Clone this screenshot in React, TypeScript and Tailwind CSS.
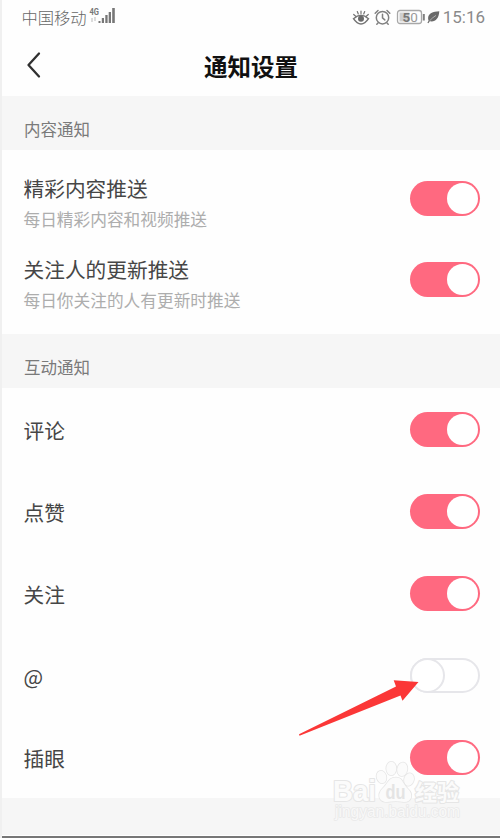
import React from 'react';

function Toggle({ on }: { on: boolean }) {
  return on ? (
    <div className="flex h-[35px] w-[70px] shrink-0 items-center justify-end rounded-full bg-[#ff6980] pr-[2px]">
      <div className="size-[31px] rounded-full bg-white" />
    </div>
  ) : (
    <div className="flex h-[35px] w-[70px] shrink-0 items-center rounded-full border-2 border-[#e6e6ea] bg-white">
      <div className="-ml-[2px] size-[35px] shrink-0 rounded-full border-2 border-[#e6e6ea] bg-white" />
    </div>
  );
}

function Section({ title }: { title: string }) {
  return (
    <div className="flex h-[54px] shrink-0 items-center bg-[#f6f6f6] pt-[12px] pl-[22px] text-[16.5px] leading-none text-[#7a7a7a]">
      {title}
    </div>
  );
}

function Described({ title, note }: { title: string; note: string }) {
  return (
    <div className="flex h-[81px] items-center justify-between pr-[20.5px] pl-[21.5px]">
      <div className="flex flex-col gap-[12px] pt-[8px] leading-none">
        <span className="text-[20.7px] text-[#464646]">{title}</span>
        <span className="text-[16.7px] text-[#adadad]">{note}</span>
      </div>
      <Toggle on />
    </div>
  );
}

function Row({ label, on }: { label: string; on: boolean }) {
  return (
    <div className="flex h-[82px] shrink-0 items-center justify-between pr-[20.5px] pl-[21.5px] text-[20.7px] leading-none text-[#464646]">
      <span className="pt-[2px]">{label}</span>
      <Toggle on={on} />
    </div>
  );
}

function StatusBar() {
  return (
    <div className="flex h-[34px] shrink-0 items-center pr-[15px] pl-[19.5px] text-[#777]">
      <span className="text-[16.3px] leading-none font-light text-[#666]">中国移动</span>
      <svg width="30" height="20" viewBox="0 0 30 20" className="ml-[2px] -mt-[2px]" fill="#777">
        <text x="0.5" y="8.5" fontSize="9" fontWeight="700" fontFamily="Roboto" textLength="9.5" lengthAdjust="spacingAndGlyphs">4G</text>
        <path d="M2 12h2v4H2zM5 11h2v4H5z" opacity=".25" />
        <path d="M9.5 15h2v2h-2zM12.8 12H15v5h-2.2zM16.3 9h2.3v8h-2.3zM19.7 6H22v11h-2.3zM23.2 2h2.6v15h-2.6z" />
      </svg>
      <div className="ml-auto flex items-center">
        <svg width="18" height="18" viewBox="0 0 18 18" fill="none" stroke="#747474" strokeWidth="1.5" strokeLinecap="round">
          <path d="M1.5 10.7Q9 3.9 16.5 10.7Q13 16 9 16T1.5 10.7Z" />
          <path d="M1.7 6.5 4 8.5M5.3 3.5l1 2.5M12.7 3.5l-1 2.5M16.3 6.5 14 8.5M9 3v2.5" strokeWidth="1.2" />
          <circle cx="9" cy="10.7" r="3" fill="#696969" stroke="none" />
        </svg>
        <svg width="17" height="18" viewBox="0 0 17 18" fill="none" stroke="#808080" strokeWidth="1.5" strokeLinecap="round" className="ml-[4px]">
          <circle cx="8.5" cy="9.7" r="6.2" />
          <path d="M8.5 6.2v3.7l2.3 2M1.2 5.2 4 2.5M15.8 5.2 13 2.5M4 15l-1.2 1.2M13 15l1.2 1.2" />
        </svg>
        <svg width="30" height="16" viewBox="0 0 30 16" className="ml-[5px]" fill="none">
          <rect x="1.5" y="1.5" width="24" height="13" rx="2.5" stroke="#a8a8a8" strokeWidth="1.3" />
          <rect x="3.5" y="3.5" width="10" height="9" fill="#cfcfcf" />
          <path d="M27.8 5v6.5" stroke="#808080" strokeWidth="2" />
          <text x="6.5" y="12.5" fontSize="13.5" fontFamily="Roboto" fill="#777"><tspan fontWeight="700">5</tspan><tspan fill="#999">0</tspan></text>
        </svg>
        <svg width="13" height="14" viewBox="0 0 13 14" className="ml-[1px]">
          <path d="M12.3 1.2C6 1.4 1 3.6 1.1 8.4c0 1.1.4 2 .9 2.6C7.5 12.8 11.9 9.2 12.3 1.2Z" fill="#6a6a6a" />
          <path d="M2.4 11C4.4 8.8 6.4 7 9 5.4" stroke="#ddd" strokeWidth=".6" fill="none" />
          <path d="m.9 13 1.5-2.3" stroke="#6a6a6a" strokeWidth="1.2" />
        </svg>
        <span className="ml-[3px] font-[Roboto] text-[17px] leading-none text-[#8a8a8a]">15:16</span>
      </div>
    </div>
  );
}

function Watermark() {
  return (
    <svg className="pointer-events-none absolute top-[758px] left-[326px]" width="140" height="70" viewBox="0 0 140 70" fill="#fbfbfb" stroke="#e6e6e6" strokeWidth="2.2" paintOrder="stroke" strokeLinejoin="round">
      <g fontFamily="'Liberation Sans', 'Noto Sans CJK SC', sans-serif">
        <text x="5" y="42.5" fontSize="29" fontWeight="700" textLength="43" lengthAdjust="spacingAndGlyphs">Bai</text>
        <g strokeWidth="1.6">
          <ellipse cx="53.5" cy="19" rx="4.8" ry="6.3" transform="rotate(-15 53.5 19)" />
          <ellipse cx="63.3" cy="10.5" rx="5" ry="6.8" />
          <ellipse cx="74.3" cy="11.3" rx="5" ry="6.8" transform="rotate(10 74.3 11.3)" />
          <ellipse cx="81" cy="21.5" rx="4.8" ry="6.3" transform="rotate(18 81 21.5)" />
          <path d="M68 19.5c-7.5 0-8.5 6.5-13 10.5-7 7-3.500 14 4 14q9-1.500 17 0c8 0 9.500-8 4-13-5.500-5-5-11.500-12-11.500Z" />
        </g>
        <text x="57.500" y="40.500" fontSize="20" fontWeight="700" textLength="20" lengthAdjust="spacingAndGlyphs" fill="#e4e4e4" stroke="none">du</text>
        <text x="87" y="42" fontSize="22" fontWeight="700" fontFamily="'Noto Sans CJK SC', sans-serif" textLength="44" lengthAdjust="spacingAndGlyphs">经验</text>
        <text x="7" y="59" fontSize="16" strokeWidth="1.600" stroke="#e9e9e9" fill="#f8f8f8" textLength="125" lengthAdjust="spacingAndGlyphs">jingyan.baidu.com</text>
      </g>
    </svg>
  );
}

export default function App() {
  return (
    <div className="relative flex h-[838px] w-[500px] flex-col overflow-hidden border-l-2 border-[#f0f0f0] bg-[#fefefe] font-['Noto_Sans_CJK_SC',sans-serif]">
      <StatusBar />
      <header className="grid h-[62px] shrink-0 grid-cols-[100px_1fr_100px] items-center">
        <svg width="16" height="28" viewBox="0 0 16 28" className="ml-[24px]" fill="none" stroke="#303030" strokeWidth="2.3" strokeLinecap="round" strokeLinejoin="round">
          <path d="M13 2.500 2.500 14 13 25.500" />
        </svg>
        <h1 className="pt-[4px] text-center text-[23.5px] leading-none font-bold text-[#111]">通知设置</h1>
      </header>
      <Section title="内容通知" />
      <div className="h-[184px] shrink-0 pt-[8px]">
        <Described title="精彩内容推送" note="每日精彩内容和视频推送" />
        <Described title="关注人的更新推送" note="每日你关注的人有更新时推送" />
      </div>
      <Section title="互动通知" />
      <div className="flex h-[410px] shrink-0 flex-col">
        <Row label="评论" on />
        <Row label="点赞" on />
        <Row label="关注" on />
        <Row label="@" on={false} />
        <Row label="插眼" on />
      </div>
      <div className="h-[38px] shrink-0 border-b border-white bg-[#f6f6f6]" />
      <div className="h-[2px] shrink-0 bg-[#777]" />
      <svg className="pointer-events-none absolute top-[676px] left-[296px]" width="124" height="62" viewBox="298 676 124 62">
        <path d="M299 734.300 L396 686.500 L393.700 680.300 L418.500 682 L402.500 700.800 L400.500 695.500 L299.500 735.700Z" fill="#fb3737" />
      </svg>
      <Watermark />
    </div>
  );
}
